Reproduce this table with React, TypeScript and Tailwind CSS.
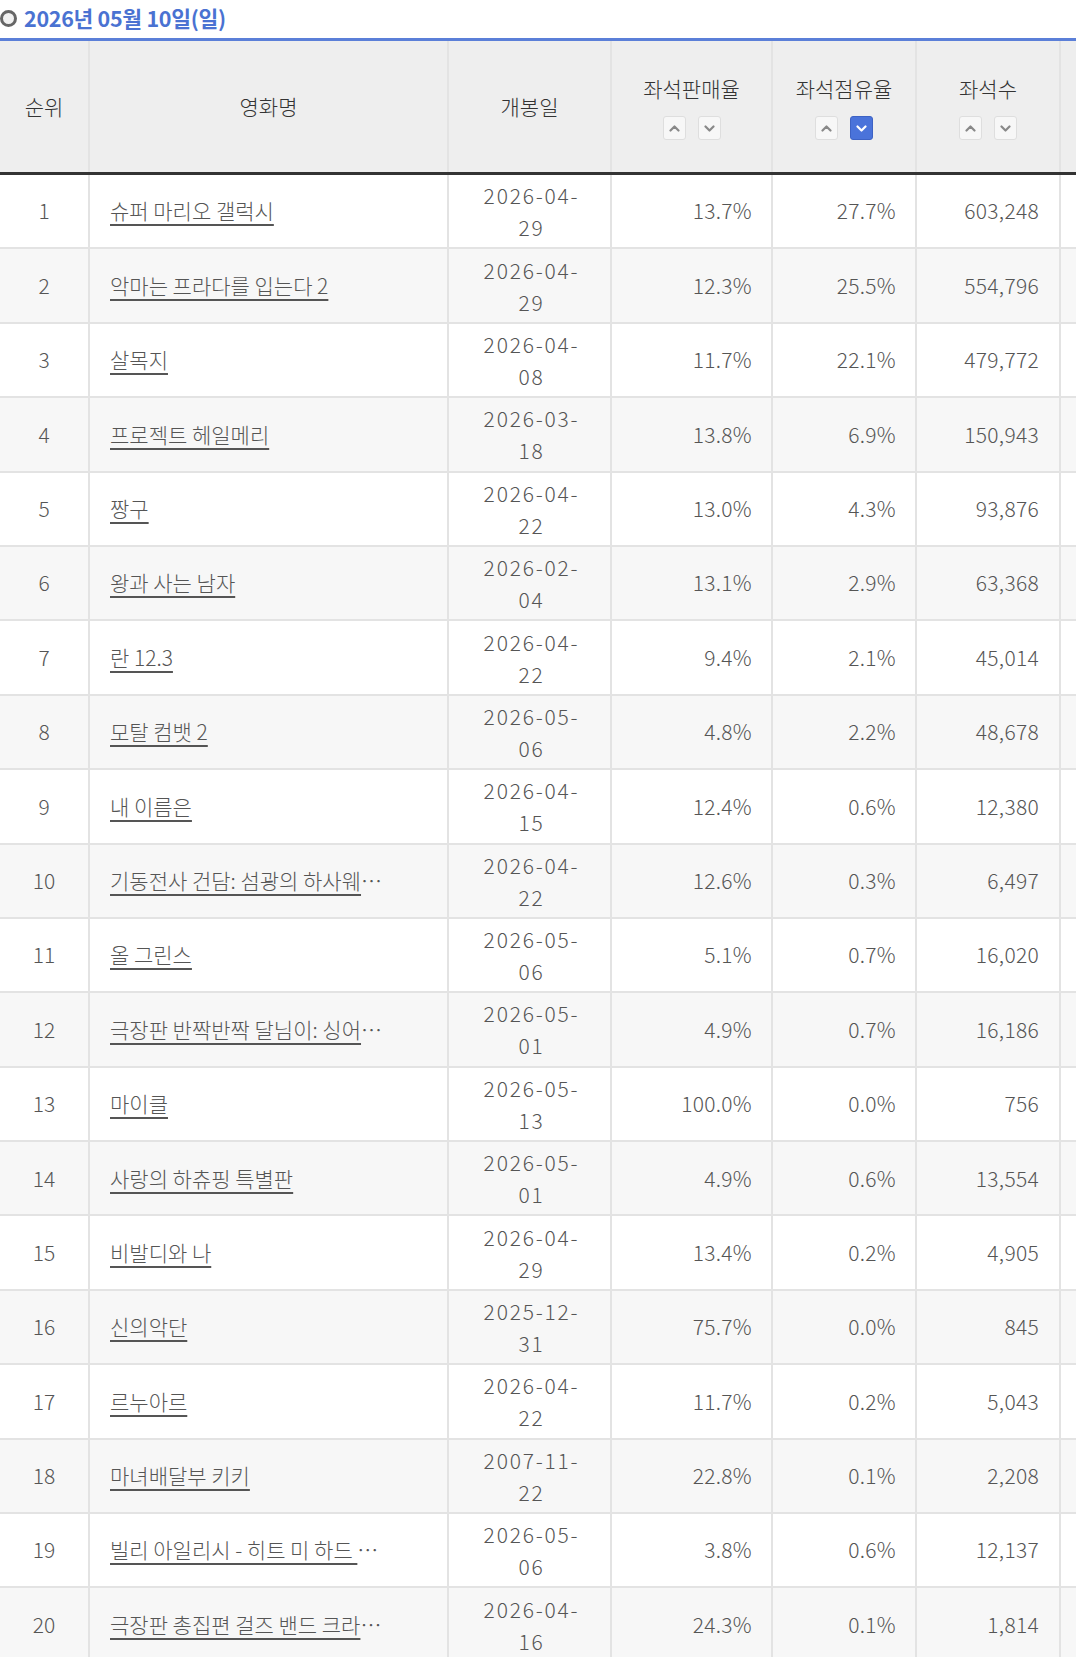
const rows: [string, string, string, string, string, string, string?][] = [
  ["1", "슈퍼 마리오 갤럭시", "2026-04-29", "13.7%", "27.7%", "603,248"],
  ["2", "악마는 프라다를 입는다 2", "2026-04-29", "12.3%", "25.5%", "554,796"],
  ["3", "살목지", "2026-04-08", "11.7%", "22.1%", "479,772"],
  ["4", "프로젝트 헤일메리", "2026-03-18", "13.8%", "6.9%", "150,943"],
  ["5", "짱구", "2026-04-22", "13.0%", "4.3%", "93,876"],
  ["6", "왕과 사는 남자", "2026-02-04", "13.1%", "2.9%", "63,368"],
  ["7", "란 12.3", "2026-04-22", "9.4%", "2.1%", "45,014"],
  ["8", "모탈 컴뱃 2", "2026-05-06", "4.8%", "2.2%", "48,678"],
  ["9", "내 이름은", "2026-04-15", "12.4%", "0.6%", "12,380"],
  ["10", "기동전사 건담: 섬광의 하사웨", "2026-04-22", "12.6%", "0.3%", "6,497", "…"],
  ["11", "올 그린스", "2026-05-06", "5.1%", "0.7%", "16,020"],
  ["12", "극장판 반짝반짝 달님이: 싱어", "2026-05-01", "4.9%", "0.7%", "16,186", "…"],
  ["13", "마이클", "2026-05-13", "100.0%", "0.0%", "756"],
  ["14", "사랑의 하츄핑 특별판", "2026-05-01", "4.9%", "0.6%", "13,554"],
  ["15", "비발디와 나", "2026-04-29", "13.4%", "0.2%", "4,905"],
  ["16", "신의악단", "2025-12-31", "75.7%", "0.0%", "845"],
  ["17", "르누아르", "2026-04-22", "11.7%", "0.2%", "5,043"],
  ["18", "마녀배달부 키키", "2007-11-22", "22.8%", "0.1%", "2,208"],
  ["19", "빌리 아일리시 - 히트 미 하드 ", "2026-05-06", "3.8%", "0.6%", "12,137", "…"],
  ["20", "극장판 총집편 걸즈 밴드 크라", "2026-04-16", "24.3%", "0.1%", "1,814", "…"],
];

const grid = "grid grid-cols-[90px_359px_163px_161px_144px_144px_1fr]";
const cell = "border-r-2 border-[#e3e3e3] flex items-center";

function Chevron({ up, color }: { up?: boolean; color: string }) {
  return (
    <svg width="11" height="7" viewBox="0 0 11 7" fill="none">
      <path
        d={up ? "M1.5 5.5 L5.5 1.5 L9.5 5.5" : "M1.5 1.5 L5.5 5.5 L9.5 1.5"}
        stroke={color}
        strokeWidth="2.2"
        strokeLinecap="round"
        strokeLinejoin="round"
      />
    </svg>
  );
}

function SortButtons({ active }: { active?: boolean }) {
  return (
    <div className="flex gap-[12px] mt-[14px]">
      <span className="w-[23px] h-[24px] rounded-[3px] border border-[#dedede] bg-[#f7f7f7] flex items-center justify-center">
        <Chevron up color="#888" />
      </span>
      {active ? (
        <span className="w-[23px] h-[24px] rounded-[3px] border border-[#3d62c4] bg-[#4a73da] flex items-center justify-center">
          <Chevron color="#fff" />
        </span>
      ) : (
        <span className="w-[23px] h-[24px] rounded-[3px] border border-[#dedede] bg-[#f7f7f7] flex items-center justify-center">
          <Chevron color="#888" />
        </span>
      )}
    </div>
  );
}

export default function App() {
  return (
    <div className="w-[1076px] overflow-hidden bg-white text-[#555] font-['Noto_Sans_CJK_KR','Noto_Sans',sans-serif]">
      <div className="h-[38px] flex items-center gap-[7px] pb-[2px]">
        <span className="w-[17px] h-[17px] rounded-full border-[3.5px] border-[#666] bg-[#f1f1f1] blur-[0.4px]" />
        <h1 className="text-[21.5px] font-bold text-[#4a72d2] tracking-[-0.3px] leading-none">
          2026년 05월 10일(일)
        </h1>
      </div>

      <div className="border-t-[3px] border-[#5b7fd8]">
        <div className={`${grid} h-[134px] bg-[#eeeeee] text-[#333] text-[21px] font-light border-b-[3px] border-[#333]`}>
          <div className={`${cell} justify-center`}>순위</div>
          <div className={`${cell} justify-center`}>영화명</div>
          <div className={`${cell} justify-center`}>개봉일</div>
          <div className={`${cell} flex-col justify-center`}>
            <span className="mt-[1px] leading-[28px]">좌석판매율</span>
            <SortButtons />
          </div>
          <div className={`${cell} flex-col justify-center`}>
            <span className="mt-[1px] leading-[28px]">좌석점유율</span>
            <SortButtons active />
          </div>
          <div className={`${cell} flex-col justify-center`}>
            <span className="mt-[1px] leading-[28px]">좌석수</span>
            <SortButtons />
          </div>
          <div />
        </div>

        {rows.map(([rank, name, date, sale, share, seats, more], i) => {
          const [y, m, d] = date.split("-");
          return (
            <div
              key={rank}
              className={`${grid} h-[74.4px] border-b-2 border-[#e3e3e3] text-[21px] font-light ${
                i % 2 === 1 ? "bg-[#f7f7f7]" : "bg-white"
              }`}
            >
              <div className={`${cell} justify-center`}>{rank}</div>
              <div className={`${cell} pl-[20px] whitespace-pre`}>
                <span className="underline underline-offset-[5px] decoration-[1.5px]">{name}</span>
                {more}
              </div>
              <div className={`${cell} justify-center text-center leading-[32px] tracking-[1.8px] pl-[4px]`}>
                <span>
                  {y}-{m}-
                  <br />
                  {d}
                </span>
              </div>
              <div className={`${cell} justify-end pr-[19px] tracking-[0.3px]`}>{sale}</div>
              <div className={`${cell} justify-end pr-[19px] tracking-[0.3px]`}>{share}</div>
              <div className={`${cell} justify-end pr-[20px] tracking-[0.3px]`}>{seats}</div>
              <div />
            </div>
          );
        })}
      </div>
    </div>
  );
}
